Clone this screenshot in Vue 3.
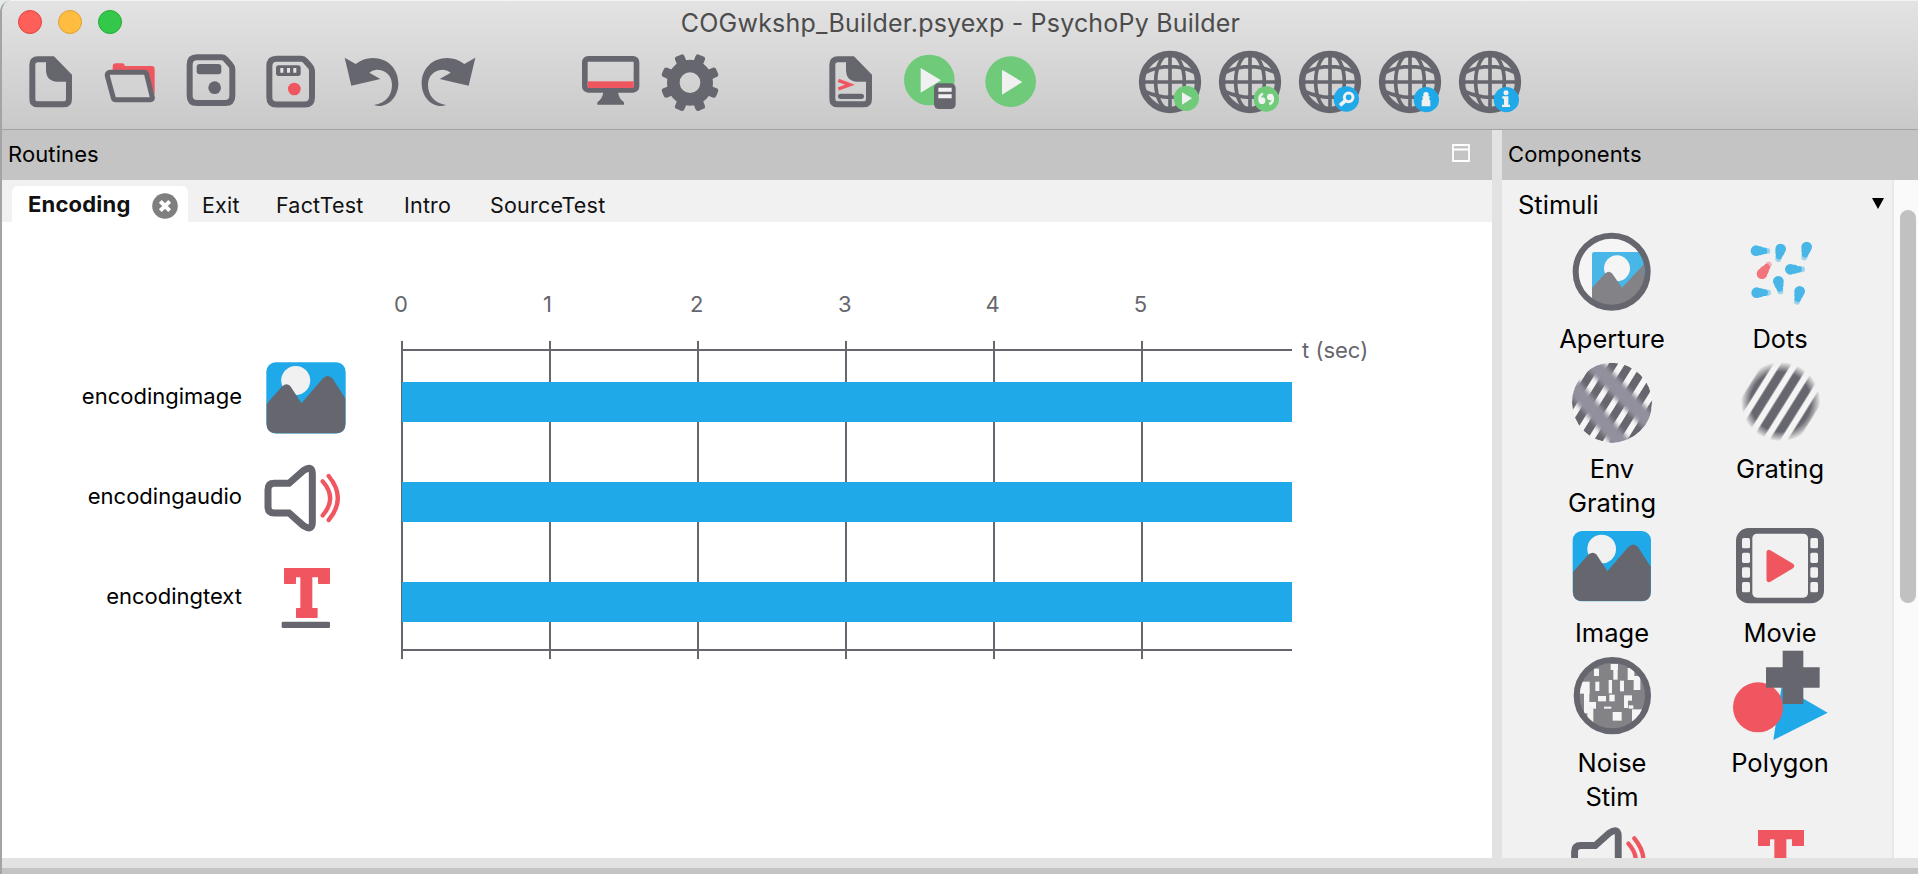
<script setup>
const ticks = [0, 1, 2, 3, 4, 5]
const tracks = [
  { name: 'encodingimage', icon: 'g-image', at: 'translate(-20.3 -27.3) scale(1.013)', box: '18 36 360 300', y: 382 },
  { name: 'encodingaudio', icon: 'g-sound', at: '', box: '18 336 360 300', y: 482 },
  { name: 'encodingtext', icon: 'g-text', at: '', box: '18 636 360 300', y: 582 },
]
const tabs = ['Exit', 'FactTest', 'Intro', 'SourceTest']
const toolGroups = [
  [
    { icon: 't-new', box: '30 126 240 240' },
    { icon: 't-open', box: '270 126 240 240' },
    { icon: 't-save', box: '510 126 240 240' },
    { icon: 't-saveas', box: '750 126 240 240' },
    { icon: 't-undo', box: '990 126 240 240' },
    { icon: 't-redo', box: '1230 126 240 240' },
  ],
  [
    { icon: 't-monitor', box: '90 126 240 240' },
    { icon: 't-gear', box: '330 126 240 240' },
  ],
  [
    { icon: 't-script', box: '810 126 240 240' },
    { icon: 't-runner', box: '1050 126 240 240' },
    { icon: 't-run', box: '1290 126 240 240' },
  ],
  [
    { icon: 't-web-run', box: '210 126 240 240' },
    { icon: 't-web-sync', box: '210 126 240 240' },
    { icon: 't-web-search', box: '210 126 240 240' },
    { icon: 't-web-user', box: '210 126 240 240' },
    { icon: 't-web-info', box: '210 126 240 240' },
  ],
]
const components = [
  { icon: 'g-aperture', box: '36 78 360 288', lines: ['Aperture'] },
  { icon: 'g-dots', box: '540 78 360 288', lines: ['Dots'] },
  { icon: 'g-env', box: '36 18 360 288', lines: ['Env', 'Grating'] },
  { icon: 'g-grating', box: '540 18 360 288', lines: ['Grating'] },
  { icon: 'g-image', box: '36 60 360 288', lines: ['Image'] },
  { icon: 'g-movie', box: '540 60 360 288', lines: ['Movie'] },
  { icon: 'g-noise', box: '216 30 360 288', lines: ['Noise', 'Stim'] },
  { icon: 'g-polygon', box: '720 30 360 288', lines: ['Polygon'] },
  { icon: 'g-sound', box: '216 522 360 288', at: 'translate(201 193) scale(.985)', lines: [] },
  { icon: 'g-text', box: '720 522 360 288', at: 'translate(702 -114)', lines: [] },
]
const drops = [
  [648, 152, 682, 153], [722, 147, 715, 177], [800, 141, 793, 172], [751, 208, 786, 208],
  [715, 244, 721, 274], [650, 278, 684, 278], [779, 274, 771, 305], [666, 221, 686, 194],
]
const noise = [
  [342, 86, 15, 22], [392, 72, 22, 18], [400, 88, 13, 31], [443, 84, 20, 36], [461, 108, 20, 42],
  [346, 125, 12, 28], [386, 120, 10, 40], [420, 122, 12, 32], [298, 125, 31, 36], [312, 158, 16, 62],
  [326, 186, 22, 20], [354, 168, 24, 16], [388, 164, 16, 20], [432, 166, 24, 16], [432, 180, 12, 24],
  [446, 196, 14, 10], [398, 216, 27, 26], [456, 208, 36, 36], [322, 205, 18, 42], [372, 200, 22, 6],
]
</script>

<template>
  <div class="window">
    <svg class="defs" width="0" height="0" aria-hidden="true">
      <defs>
        <g id="page-shape">
          <path d="M158 178H114Q97 178 97 195V296Q97 313 114 313H190Q207 313 207 296V228Z" fill="none" stroke="#66666e" stroke-width="18" />
          <path d="M138 172H160L215 227V245H172Q138 243 138 209Z" fill="#66666e" />
        </g>
        <g id="t-new"><use href="#page-shape" /></g>
        <g id="t-open">
          <path d="M338 216V200Q338 190 348 190H366Q374 190 374 198H455Q464 198 464 207V285L440 216Z" fill="#f0565f" />
          <path d="M330 217H433Q438 217 440 223L457 292Q458 299 451 299H347Q342 299 340 294L322 228Q320 218 330 217Z" fill="#d3d3d3" stroke="#66666e" stroke-width="15" />
        </g>
        <g id="disk-shape">
          <path d="M591 172H665Q672 172 677 178L692 195Q697 200 697 208V287Q697 309 675 309H591Q569 309 569 287V194Q569 172 591 172Z" fill="none" stroke="#66666e" stroke-width="18" />
        </g>
        <g id="t-save">
          <use href="#disk-shape" />
          <rect x="590" y="192" width="74" height="31" rx="9" fill="#66666e" />
          <circle cx="644" cy="263" r="19" fill="#66666e" />
        </g>
        <g id="t-saveas">
          <use href="#disk-shape" transform="translate(239 4.500)" />
          <rect x="828" y="196" width="74" height="32" rx="8" fill="#66666e" />
          <path d="M841 204h9v14h-9zM861 204h9v14h-9zM880 204h9v14h-9z" fill="#e6e6e6" />
          <circle cx="883" cy="267" r="19" fill="#f0565f" />
        </g>
        <g id="t-undo">
          <path d="M1034 173L1067 192Q1090 174 1118 174C1165 174 1195 208 1195 250C1195 292 1166 316 1142 318Q1130 319 1122 315C1158 309 1176 285 1176 255C1176 225 1155 209 1130 209Q1116 210 1108 218L1141 237L1054 257Z" fill="#66666e" />
        </g>
        <g id="t-redo"><use href="#t-undo" transform="translate(2460 0) scale(-1 1)" /></g>
        <g id="t-monitor">
          <rect x="134.500" y="176.500" width="155" height="93" rx="10" fill="none" stroke="#66666e" stroke-width="17" />
          <rect x="143" y="244" width="138" height="20" fill="#f0565f" />
          <path d="M190 276H234Q236 296 252 307V314H172V307Q188 296 190 276Z" fill="#66666e" />
        </g>
        <g id="t-gear">
          <circle cx="450" cy="248" r="50" fill="none" stroke="#66666e" stroke-width="38" />
          <rect v-for="k in 8" :key="k" x="435" y="160" width="30" height="38" rx="8" fill="#66666e" :transform="`rotate(${k * 45 - 22.5} 450 248)`" />
        </g>
        <g id="t-script">
          <use href="#page-shape" x="780" />
          <path d="M895 241L930 254L895 267" fill="none" stroke="#f0565f" stroke-width="10" />
          <path d="M902 289H964" stroke="#66666e" stroke-width="16" stroke-linecap="round" />
        </g>
        <g id="t-runner">
          <circle cx="1168" cy="240" r="76" fill="#6fcb79" />
          <path d="M1142 204V278L1203 241Z" fill="#f1f1f1" />
          <rect x="1182" y="250" width="65" height="77" rx="14" fill="#66666e" />
          <path d="M1195 263H1235V275H1195ZM1195 283H1235V295H1195Z" fill="#f1f1f1" />
        </g>
        <g id="t-run">
          <circle cx="1412" cy="245" r="76" fill="#6fcb79" />
          <path d="M1386 209V284L1447 246Z" fill="#f1f1f1" />
        </g>
        <g id="globe" fill="none" stroke="#66666e" stroke-width="11">
          <circle cx="330" cy="246" r="84" stroke-width="19" />
          <ellipse cx="330" cy="246" rx="43" ry="84" />
          <path d="M330 162V330M246 246H414M256 217Q330 183 404 217M256 275Q330 309 404 275" />
        </g>
        <g id="t-web-run">
          <use href="#globe" />
          <circle cx="379" cy="295" r="38" fill="#6fcb79" />
          <path d="M366 277V314L396 295Z" fill="#f1f1f1" />
        </g>
        <g id="t-web-sync">
          <use href="#globe" />
          <circle cx="379" cy="297" r="38" fill="#6fcb79" />
          <circle cx="366" cy="302" r="10" fill="#f1f1f1" />
          <path d="M359 303Q355 288 369 281" fill="none" stroke="#f1f1f1" stroke-width="7" />
          <circle cx="391" cy="291" r="10" fill="#f1f1f1" />
          <path d="M398 290Q402 306 388 313" fill="none" stroke="#f1f1f1" stroke-width="7" />
        </g>
        <g id="t-web-search">
          <use href="#globe" />
          <circle cx="379" cy="297" r="38" fill="#1fa9e8" />
          <circle cx="386" cy="292" r="13" fill="none" stroke="#f1f1f1" stroke-width="9" />
          <path d="M377 301L360 316" stroke="#f1f1f1" stroke-width="11" />
        </g>
        <g id="t-web-user">
          <use href="#globe" />
          <circle cx="379" cy="299" r="38" fill="#1fa9e8" />
          <circle cx="378" cy="284" r="8" fill="#f1f1f1" />
          <path d="M367 289H389V295H386L391 302V319H365V302L370 295H367Z" fill="#f1f1f1" />
        </g>
        <g id="t-web-info">
          <use href="#globe" />
          <circle cx="379" cy="299" r="38" fill="#1fa9e8" />
          <circle cx="378" cy="278" r="7.500" fill="#f1f1f1" />
          <path d="M367 289H385V314H390V321H366V314H372V296H367Z" fill="#f1f1f1" />
        </g>

        <g id="g-image">
          <rect x="98" y="93" width="235" height="211" rx="28" fill="#1fa9e8" />
          <circle cx="185" cy="147" r="43" fill="#f1f1f1" />
          <path d="M99 216L146 163Q158 153 169 163L202 214L265 141Q280 126 294 141L332 200V276Q332 303 305 303H126Q99 303 99 276Z" fill="#66666e" />
        </g>
        <g id="g-sound" fill="none">
          <path d="M103 430H147L190 392Q216 374 217 400V548Q216 574 190 557L147 519H103Q84 519 84 500V449Q84 430 103 430Z" stroke="#66666e" stroke-width="21" />
          <path d="M248 424Q293 475 248 526M266 408Q321 475 266 540" stroke="#f0565f" stroke-width="13" stroke-linecap="round" />
        </g>
        <g id="g-text">
          <g fill="#f0565f">
            <rect x="132" y="684" width="138" height="28" rx="2" />
            <rect x="132" y="684" width="36" height="48" rx="2" />
            <rect x="234" y="684" width="36" height="48" rx="2" />
            <rect x="181" y="700" width="36" height="120" />
            <rect x="168" y="804" width="65" height="30" rx="2" />
          </g>
          <rect x="125" y="845" width="145" height="19" rx="4" fill="#66666e" />
        </g>
        <clipPath id="clip-aperture"><circle cx="215" cy="215" r="108" /></clipPath>
        <g id="g-aperture">
          <circle cx="215" cy="215" r="108" fill="#f5f5f5" />
          <g clip-path="url(#clip-aperture)">
            <path d="M156 163Q156 156 163 156H300L325 200V330H156Z" fill="#48b7e8" />
            <circle cx="231" cy="205" r="39" fill="#f5f5f5" />
            <path d="M156 263L196 220Q206 211 216 220L246 263L312 193V330H156Z" fill="#838287" />
          </g>
          <circle cx="215" cy="215" r="108" fill="none" stroke="#66666e" stroke-width="18" />
        </g>
        <g id="g-dots">
          <g v-for="(d, i) in drops" :key="i" :fill="i === 7 ? '#f2747c' : '#48b7e8'" :stroke="i === 7 ? '#f2747c' : '#48b7e8'" stroke-linecap="round">
            <path :d="`M${d[0]} ${d[1]}L${d[2]} ${d[3]}`" stroke-width="18" opacity=".5" />
            <path :d="`M${d[0]} ${d[1]}L${d[0] * .3 + d[2] * .7} ${d[1] * .3 + d[3] * .7}`" stroke-width="20" />
            <path :d="`M${d[0]} ${d[1]}L${d[0] * .65 + d[2] * .35} ${d[1] * .65 + d[3] * .35}`" stroke-width="27" />
            <circle :cx="d[0]" :cy="d[1]" r="16" stroke="none" />
          </g>
        </g>
        <pattern id="stripes" width="46" height="46" patternUnits="userSpaceOnUse" patternTransform="translate(722 155) rotate(32)">
          <rect width="46" height="46" fill="#f4f4f4" />
          <rect width="13.500" height="46" fill="#66666e" />
          <rect x="32.500" width="13.500" height="46" fill="#66666e" />
        </pattern>
        <pattern id="stripes-env" width="42" height="42" patternUnits="userSpaceOnUse" patternTransform="translate(208 140) rotate(32)">
          <rect width="42" height="42" fill="#f6f6f6" />
          <rect width="12" height="42" fill="#66666e" />
          <rect x="30" width="12" height="42" fill="#66666e" />
        </pattern>
        <radialGradient id="fade">
          <stop offset=".75" stop-color="#fff" />
          <stop offset="1" stop-color="#fff" stop-opacity="0" />
        </radialGradient>
        <mask id="mask-fade"><circle cx="722" cy="155" r="120" fill="url(#fade)" /></mask>
        <filter id="soft"><feGaussianBlur stdDeviation="7" /></filter>
        <clipPath id="clip-env"><circle cx="216" cy="158" r="120" /></clipPath>
        <g id="g-grating"><circle cx="722" cy="155" r="118" fill="url(#stripes)" mask="url(#mask-fade)" /></g>
        <g id="g-env" clip-path="url(#clip-env)">
          <circle cx="216" cy="158" r="120" fill="url(#stripes-env)" />
          <g stroke="#92909c" stroke-width="50" filter="url(#soft)">
            <path d="M130 10L350 240" />
            <path d="M70 75L270 310" />
          </g>
        </g>
        <g id="g-movie">
          <rect x="588" y="84" width="264" height="226" rx="38" fill="#66666e" />
          <rect x="637" y="101" width="167" height="192" rx="14" fill="#f1f1f1" />
          <g v-for="k in 4" :key="k" fill="#f1f1f1">
            <rect x="606" :y="70 + k * 44" width="24" height="31" rx="5" />
            <rect x="811" :y="70 + k * 44" width="23" height="31" rx="5" />
          </g>
          <path d="M687 157L755 198L687 239Z" fill="#f0565f" stroke="#f0565f" stroke-width="15" stroke-linejoin="round" />
        </g>
        <clipPath id="clip-noise"><circle cx="397" cy="167" r="100" /></clipPath>
        <g id="g-noise">
          <circle cx="397" cy="167" r="107" fill="#838287" />
          <g clip-path="url(#clip-noise)" fill="#f5f5f5">
            <rect v-for="(n, i) in noise" :key="i" :x="n[0]" :y="n[1]" :width="n[2]" :height="n[3]" />
          </g>
          <circle cx="397" cy="167" r="107" fill="none" stroke="#66666e" stroke-width="18" />
        </g>
        <g id="g-polygon">
          <path d="M905 138L1043 218L880 300Z" fill="#1fa9e8" />
          <circle cx="834" cy="202" r="75" fill="#f0565f" />
          <path d="M908 32H970V82H1019V143H970V192H908V143H858V82H908Z" fill="#66666e" />
        </g>
      </defs>
    </svg>

    <header class="chrome">
      <div class="titlebar">
        <div class="lights"><i class="red" /><i class="amber" /><i class="green" /></div>
        <h1 class="title">COGwkshp_Builder.psyexp - PsychoPy Builder</h1>
      </div>
      <nav class="toolbar">
        <div v-for="(group, g) in toolGroups" :key="g" class="tool-group">
          <svg v-for="t in group" :key="t.icon" class="tool" :viewBox="t.box"><use :href="'#' + t.icon" /></svg>
        </div>
      </nav>
    </header>

    <main class="panes">
      <section class="routines">
        <div class="caption">
          <span>Routines</span>
          <svg class="maximize" width="20" height="20" viewBox="0 0 20 20" fill="none" stroke="#fff" stroke-width="1.800">
            <path d="M2 2H18V18H2ZM2 6.500H18" />
          </svg>
        </div>
        <div class="tabs">
          <div class="tab active">
            <span>Encoding</span>
            <svg width="26" height="26" viewBox="0 0 26 26">
              <circle cx="13" cy="13" r="12.800" fill="#7f7f7f" />
              <path d="M8.300 8.300L17.700 17.700M17.700 8.300L8.300 17.700" stroke="#fff" stroke-width="4" />
            </svg>
          </div>
          <div v-for="t in tabs" :key="t" class="tab" :class="t.toLowerCase()">{{ t }}</div>
        </div>
        <div class="canvas">
          <div class="tracks">
            <div v-for="t in tracks" :key="t.name" class="track">
              <span>{{ t.name }}</span>
              <svg width="120" height="100" :viewBox="t.box"><use :href="'#' + t.icon" :transform="t.at" /></svg>
            </div>
          </div>
          <svg class="timeline" width="1030" height="400" viewBox="366 280 1030 400">
            <g fill="#66666e">
              <rect v-for="k in ticks" :key="k" :x="401 + k * 148" y="341" width="2" height="318" />
              <rect x="401" y="349" width="891" height="2" />
              <rect x="401" y="649" width="891" height="2" />
            </g>
            <rect v-for="t in tracks" :key="t.name" x="402" :y="t.y" width="890" height="40" fill="#1fa9e8" />
            <text v-for="k in ticks" :key="k" :x="(k === 1 ? 399.5 : 401) + k * 147.900" y="312" text-anchor="middle">{{ k }}</text>
            <text x="1302" y="358" class="unit">t (sec)</text>
          </svg>
        </div>
      </section>

      <section class="components">
        <div class="caption"><span>Components</span></div>
        <div class="palette">
          <div class="list">
            <div class="category">
              <span>Stimuli</span>
              <svg width="12" height="11" viewBox="0 0 12 11"><path d="M0 0H12L6 11Z" /></svg>
            </div>
            <div class="grid">
              <div v-for="c in components" :key="c.icon" class="item">
                <svg width="120" height="96" :viewBox="c.box"><use :href="'#' + c.icon" :transform="c.at" /></svg>
                <span v-for="l in c.lines" :key="l">{{ l }}</span>
              </div>
            </div>
          </div>
          <div class="scrollbar"><div class="thumb" /></div>
        </div>
      </section>
    </main>
    <footer class="status" />
  </div>
</template>

<style>
body {
  background: #e4e9ea;
  overflow: hidden;
}
</style>

<style scoped>
.window {
  box-sizing: border-box;
  width: 1918px;
  height: 874px;
  display: flex;
  flex-direction: column;
  border-left: 2px solid #a4a4a4;
  border-top-left-radius: 12px;
  overflow: hidden;
  font-family: Inter, "Liberation Sans", sans-serif;
  color: #000;
  background: #fff;
}
.defs {
  position: absolute;
}
.chrome {
  box-sizing: border-box;
  flex: none;
  height: 130px;
  border-top: 1px solid #f4f4f4;
  border-bottom: 1px solid #a2a2a2;
  background: linear-gradient(#e3e3e3, #c9c9c9);
}
.titlebar {
  display: flex;
  align-items: center;
  height: 41px;
}
.lights {
  display: flex;
  gap: 16px;
  padding-left: 16px;
  width: 120px;
}
.lights i {
  box-sizing: border-box;
  width: 24px;
  height: 24px;
  border-radius: 50%;
  border-width: 1px;
  border-style: solid;
}
.red { background: #fe5f58; border-color: #e2443f; }
.amber { background: #febc40; border-color: #dfa033; }
.green { background: #34c84a; border-color: #25ab35; }
.title {
  flex: 1;
  margin: 2px 135px 0 0;
  text-align: center;
  font-size: 25px;
  line-height: 30px;
  font-weight: 400;
  letter-spacing: 0.2px;
  color: #4c4c4c;
  white-space: nowrap;
}
.toolbar {
  display: flex;
  gap: 80px;
  padding-left: 8px;
}
.tool-group {
  display: flex;
}
.tool {
  width: 80px;
  height: 80px;
}
.panes {
  flex: none;
  height: 728px;
  display: flex;
  gap: 10px;
  background: #e2e2e2;
}
.routines {
  width: 1490px;
  display: flex;
  flex-direction: column;
}
.components {
  flex: 1;
  display: flex;
  flex-direction: column;
}
.caption {
  flex: none;
  box-sizing: border-box;
  height: 50px;
  padding: 0 21px 2px 6px;
  display: flex;
  align-items: center;
  justify-content: space-between;
  background: #c4c4c4;
  font-size: 22px;
  letter-spacing: 0.1px;
}
.maximize {
  margin-top: -2px;
}
.tabs {
  flex: none;
  display: flex;
  align-items: flex-end;
  height: 42px;
  background: #f1f1f1;
  font-size: 21.500px;
  letter-spacing: 0.2px;
  color: #111;
}
.tab {
  height: 36px;
  line-height: 38px;
  white-space: nowrap;
}
.tab.active {
  display: flex;
  align-items: center;
  justify-content: space-between;
  box-sizing: border-box;
  width: 176px;
  margin-left: 10px;
  padding: 0 10px 0 16px;
  border-radius: 6px 6px 0 0;
  background: #fff;
  font-size: 22px;
  font-weight: 700;
}
.active svg {
  margin-top: 4px;
}
.tab.exit { margin-left: 14px; width: 74px; }
.tab.facttest { width: 128px; }
.tab.intro { width: 86px; }
.canvas {
  flex: 1;
  display: flex;
  align-items: flex-start;
  background: #fff;
}
.tracks {
  width: 364px;
  padding-top: 130px;
}
.track {
  display: grid;
  grid-template-columns: 240px 120px;
  column-gap: 4px;
  height: 100px;
  font-size: 22px;
}
.track span {
  text-align: right;
  padding-top: 30px;
  line-height: 28px;
}
.timeline {
  margin-top: 58px;
}
.timeline text {
  font-size: 22px;
  fill: #66666e;
}
.palette {
  flex: 1;
  min-height: 0;
  display: flex;
  background: #f1f1f1;
}
.list {
  width: 390px;
  overflow: hidden;
}
.category {
  display: flex;
  align-items: center;
  justify-content: space-between;
  height: 46px;
  padding: 0 8px 0 16px;
  font-size: 25.500px;
}
.category span {
  padding-top: 3px;
}
.grid {
  display: grid;
  grid-template-columns: 168px 168px;
  padding-left: 26px;
}
.item {
  display: flex;
  flex-direction: column;
  align-items: center;
  font-size: 25.500px;
  line-height: 34px;
}
.scrollbar {
  box-sizing: border-box;
  width: 26px;
  padding: 30px 0 0 6px;
  border-left: 2px solid #e8e8e8;
  background: #fafafa;
}
.thumb {
  width: 16px;
  height: 393px;
  border-radius: 8px;
  background: #c1c1c1;
}
.status {
  flex: 1;
  border-top: 10px solid #e2e2e2;
  background: #c4c4c4;
}
</style>
